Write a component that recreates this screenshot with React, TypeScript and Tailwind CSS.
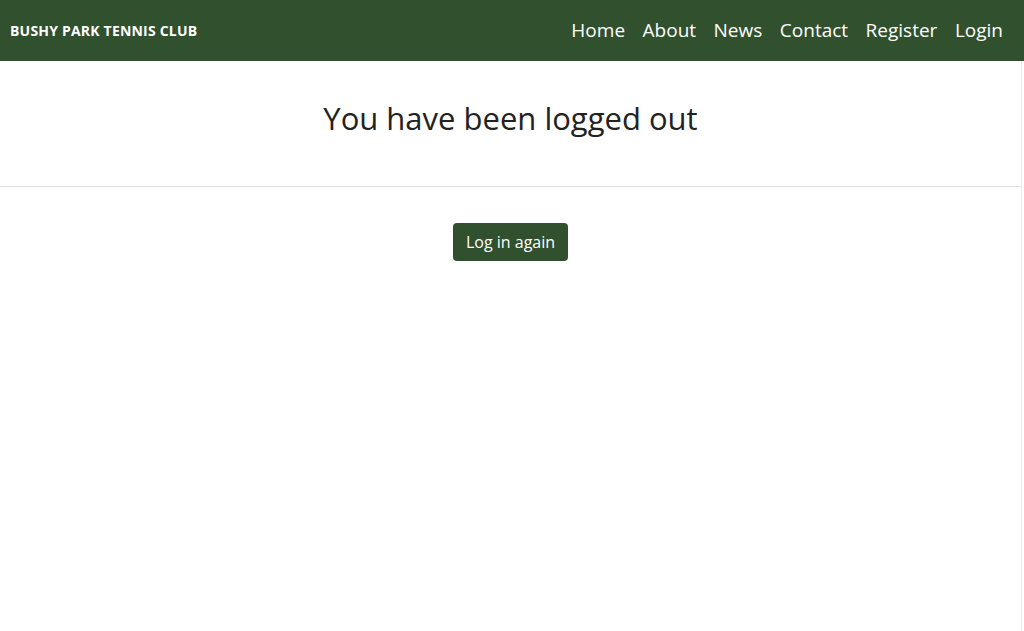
export default function App() {
  const links = ["Home", "About", "News", "Contact", "Register", "Login"];
  return (
    <div className="min-h-[631px] bg-white" style={{ fontFamily: '"Open Sans", "Liberation Sans", sans-serif' }}>
      <nav className="h-[61px] bg-[#31502d] flex items-center justify-between pl-[10px] pr-[21px]">
        <span className="text-white font-bold text-[14px] tracking-[0.2px]">BUSHY PARK TENNIS CLUB</span>
        <ul className="flex gap-[17.5px]">
          {links.map((l) => (
            <li key={l} className="text-white text-[19px]">{l}</li>
          ))}
        </ul>
      </nav>
      <div className="mr-[2px] border-r border-[#ececec] min-h-[570px]">
        <div className="h-[126px] border-b border-[#e2e2e2] flex items-center justify-center">
          <h1 className="text-[31px] text-[#222] pb-[10px]">You have been logged out</h1>
        </div>
        <div className="flex justify-center pt-[36px]">
          <button className="h-[38px] px-[13px] rounded-[4px] bg-[#31502d] text-white text-[16px]">Log in again</button>
        </div>
      </div>
    </div>
  );
}
